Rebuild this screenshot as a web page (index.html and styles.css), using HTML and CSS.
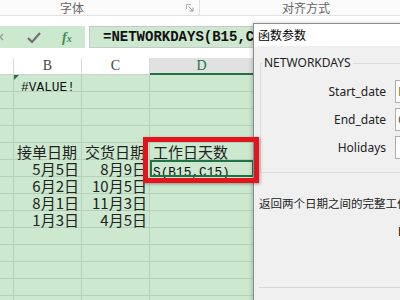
FILE: index.html
```html
<!DOCTYPE html>
<html>
<head>
<meta charset="utf-8">
<link rel="stylesheet" href="styles.css">
</head>
<body>
<div class="app">
  <div class="ribbon">
    <div class="rg rg1"><span class="rl">字体</span>
      <svg class="launch" width="8" height="8" viewBox="0 0 8 8"><path d="M0.5 5V0.5H5" fill="none" stroke="#b0b0b0" stroke-width="1"/><path d="M2.5 2.5L7 7M7 3.5V7H3.5" fill="none" stroke="#9a9a9a" stroke-width="1"/></svg>
    </div>
    <div class="rg rg2"><span class="rl">对齐方式</span></div>
  </div>
  <div class="fbar">
    <div class="btns">
      <svg width="85" height="22" viewBox="0 0 85 22">
        <path d="M-3 8L3 14M3 8L-3 14" stroke="#9a9a9a" stroke-width="1.4" fill="none"/>
        <polyline points="28,12 32,16 40,7" fill="none" stroke="#707070" stroke-width="2.2"/>
        <text x="62" y="16" font-family="Liberation Serif" font-style="italic" font-weight="bold" font-size="14" fill="#3f8f52">f<tspan font-size="10">x</tspan></text>
      </svg>
    </div>
    <div class="formula">=NETWORKDAYS(B15,C15)</div>
  </div>
  <div class="grid">
    <div class="h"></div><div class="h">B</div><div class="h">C</div><div class="h hs">D</div><div class="h"></div>

    <div class="c"></div><div class="c ctr tri"><span class="m">#VALUE!</span></div><div class="c"></div><div class="c"></div><div class="c"></div>
    <div class="c"></div><div class="c"></div><div class="c"></div><div class="c"></div><div class="c"></div>
    <div class="c"></div><div class="c"></div><div class="c"></div><div class="c"></div><div class="c"></div>
    <div class="c"></div><div class="c"></div><div class="c"></div><div class="c"></div><div class="c"></div>
    <div class="c"></div><div class="c">接单日期</div><div class="c">交货日期</div><div class="c">工作日天数</div><div class="c"></div>
    <div class="c"></div><div class="c r">5月5日</div><div class="c r">8月9日</div><div class="c sel"><span class="m">S(B15,C15)</span></div><div class="c"></div>
    <div class="c"></div><div class="c r">6月2日</div><div class="c r">10月5日</div><div class="c"></div><div class="c"></div>
    <div class="c"></div><div class="c r">8月1日</div><div class="c r">11月3日</div><div class="c"></div><div class="c"></div>
    <div class="c"></div><div class="c r">1月3日</div><div class="c r">4月5日</div><div class="c"></div><div class="c"></div>
    <div class="c"></div><div class="c"></div><div class="c"></div><div class="c"></div><div class="c"></div>
    <div class="c"></div><div class="c"></div><div class="c"></div><div class="c"></div><div class="c"></div>
    <div class="c"></div><div class="c"></div><div class="c"></div><div class="c"></div><div class="c"></div>
    <div class="c"></div><div class="c"></div><div class="c"></div><div class="c"></div><div class="c"></div>
    <div class="c"></div><div class="c"></div><div class="c"></div><div class="c"></div><div class="c"></div>
  </div>

  <div class="dialog">
    <div class="dt">函数参数</div>
    <div class="db">
      <fieldset class="grp">
        <legend>NETWORKDAYS</legend>
        <div class="ar"><span class="al">Start_date</span><span class="ai ai1">B15</span></div>
        <div class="ar"><span class="al">End_date</span><span class="ai ai2">C15</span></div>
        <div class="ar"><span class="al">Holidays</span><span class="ai"></span></div>
      </fieldset>
      <div class="desc">返回两个日期之间的完整工作日数</div>
      <div class="help">End_date</div>
      <div class="sep"></div>
    </div>
  </div>

  <div class="redbox"></div>
</div>
</body>
</html>
```

FILE: styles.css
```css
body {
  margin: 0;
  background: #fff;
}
.app {
  position: relative;
  width: 400px;
  height: 300px;
  overflow: hidden;
  font-family: "Noto Sans", "Noto Sans CJK SC", sans-serif;
}
.ribbon {
  display: flex;
  height: 15px;
  border-bottom: 1px solid #e1e1e1;
  background: #fbfbfb;
}
.rg {
  display: flex;
  align-items: center;
  height: 15px;
  box-sizing: border-box;
}
.rg1 {
  width: 200px;
  padding-left: 60px;
  border-right: 1px solid #e1e1e1;
}
.rg2 {
  padding-left: 82px;
}
.rl {
  font-family: "Noto Sans CJK SC", sans-serif;
  font-size: 12px;
  line-height: 12px;
  color: #666;
}
.launch {
  margin-left: auto;
  margin-right: 5px;
}
.fbar {
  display: flex;
  height: 22px;
  margin-top: 10px;
}
.btns {
  width: 85px;
  background: #cce8cf;
}
.formula {
  margin-left: 4px;
  flex: 1;
  background: #cce8cf;
  border: 1px solid #c8c8c8;
  border-right: none;
  padding-left: 13px;
  font: bold 14px/21px "Liberation Mono", monospace;
  color: #111;
  white-space: nowrap;
  overflow: hidden;
}
.grid {
  margin-top: 10px;
  display: grid;
  grid-template-columns: 14px 68px 68px 104px 1fr;
  grid-auto-rows: 17px;
}
.h {
  background: #fff;
  border-right: 1px solid #dadada;
  border-bottom: 1px solid #d0d0d0;
  box-sizing: border-box;
  font: 14px/16px "Liberation Serif", serif;
  color: #444;
  text-align: center;
}
.hs {
  background: #e1e1e1;
  color: #217346;
  border-bottom: 2px solid #217346;
}
.c {
  position: relative;
  background: #cce8cf;
  border-right: 1px solid #b7d1b9;
  border-bottom: 1px solid #b7d1b9;
  box-sizing: border-box;
  font: 15px/15px "Noto Sans CJK SC", sans-serif;
  color: #222;
  padding: 1px 2px 0 3px;
  white-space: nowrap;
}
.r {
  text-align: right;
}
.ctr {
  text-align: center;
}
.m {
  font: 12.8px "Liberation Mono", monospace;
  line-height: 0;
  vertical-align: -1px;
  color: #111;
}
.tri::before {
  content: "";
  position: absolute;
  left: 0;
  top: 0;
  border-top: 5px solid #217346;
  border-right: 5px solid transparent;
}
.sel {
  z-index: 1;
  outline: 2px solid #217346;
  outline-offset: -2px;
}
.dialog {
  position: absolute;
  left: 253px;
  top: 23px;
  width: 220px;
  height: 290px;
  background: #f0f0f0;
  border: 1px solid #8c8c8c;
  box-shadow: -1px 0 4px rgba(0, 0, 0, 0.2);
  z-index: 2;
}
.dt {
  height: 22px;
  background: #fff;
  font: 12px/22px "Noto Sans CJK SC", sans-serif;
  padding-left: 4px;
  color: #000;
}
.db {
  padding: 9px 0 0 5px;
}
.grp {
  margin: 0 0 0 1px;
  padding: 9px 0 13px 0;
  border: 1px solid #dcdcdc;
  border-right: none;
  min-width: 0;
}
.grp legend {
  padding: 0 2px;
  margin-left: 1px;
  font: 12px/16px "Noto Sans", sans-serif;
  color: #222;
}
.ar {
  display: flex;
  align-items: center;
  height: 23px;
  margin-bottom: 5px;
}
.ar:last-child {
  margin-bottom: 0;
}
.al {
  flex: 0 0 125px;
  text-align: right;
  font: 12px "Noto Sans", sans-serif;
  color: #222;
}
.ai {
  flex: 0 0 60px;
  margin-left: 9px;
  height: 23px;
  box-sizing: border-box;
  border: 1px solid #acacac;
  background: #fff;
  font: 12px/21px "Noto Sans", sans-serif;
  padding-left: 2px;
}
.ai1 {
  color: #8a7a3a;
}
.ai2 {
  color: #555;
}
.desc {
  margin-top: 22px;
  font: 11.5px/16px "Noto Sans CJK SC", sans-serif;
  color: #222;
  white-space: nowrap;
}
.help {
  margin-top: 13px;
  padding-left: 139px;
  font: bold 12px/16px "Noto Sans", sans-serif;
  color: #222;
  white-space: nowrap;
}
.sep {
  margin-top: 47px;
  border-top: 1px solid #d6d6d6;
}
.redbox {
  position: absolute;
  left: 143px;
  top: 137px;
  width: 116px;
  height: 46px;
  box-sizing: border-box;
  border: 5px solid #e3141b;
  box-shadow: 1px 1px 3px rgba(0, 0, 0, 0.35);
  z-index: 3;
}
```
